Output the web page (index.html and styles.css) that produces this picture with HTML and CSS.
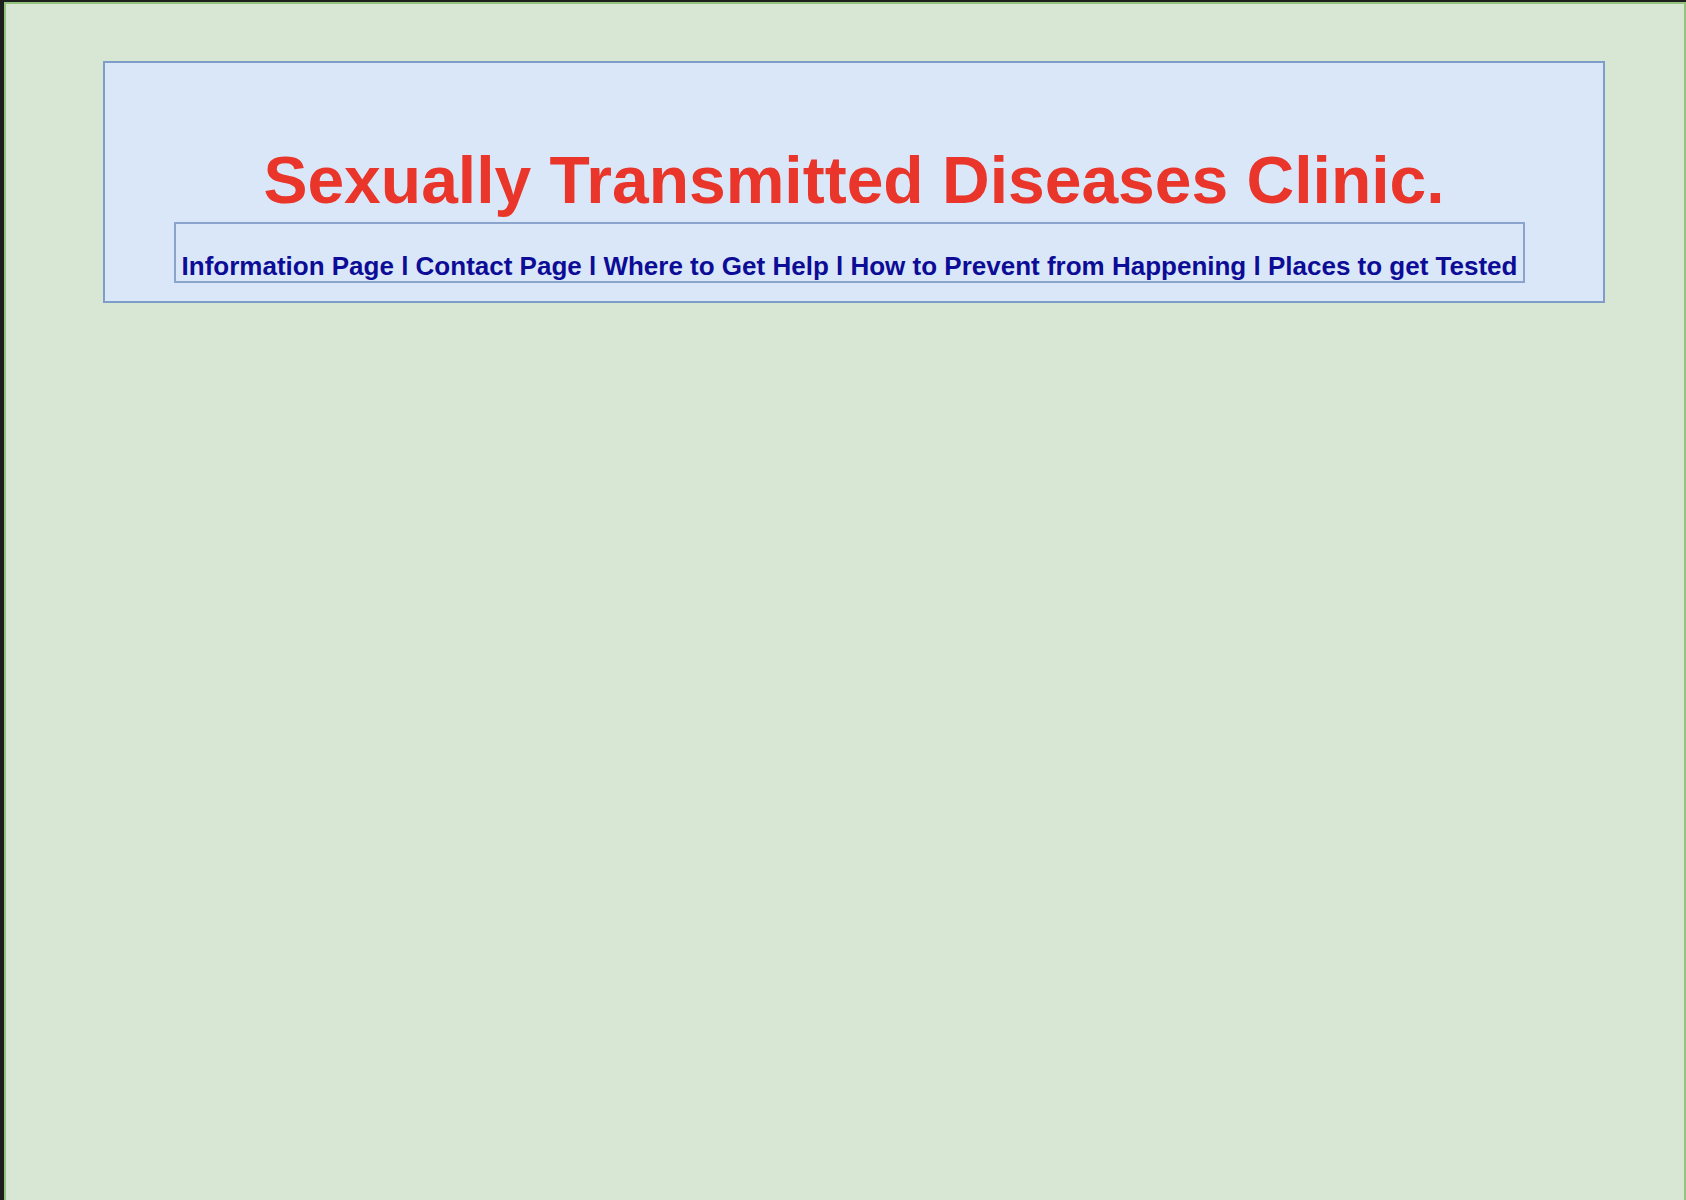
FILE: index.html
```html
<!DOCTYPE html>
<html lang="en">
<head>
<meta charset="utf-8">
<title>Sexually Transmitted Diseases Clinic.</title>
<link rel="stylesheet" href="styles.css">
</head>
<body>
<div class="frame">
  <header class="banner">
    <h1 class="title">Sexually Transmitted Diseases Clinic.</h1>
    <nav class="nav">
      <a href="#">Information Page</a> l <a href="#">Contact Page</a> l <a href="#">Where to Get Help</a> l <a href="#">How to Prevent from Happening</a> l <a href="#">Places to get Tested</a>
    </nav>
  </header>
</div>
</body>
</html>
```
FILE: styles.css
```css
html, body {
  margin: 0;
  padding: 0;
  height: 100%;
}
body {
  background: #1e1e1e;
  font-family: "Liberation Sans", Arial, Helvetica, sans-serif;
}
.frame {
  box-sizing: border-box;
  margin: 2px 0 0 4px;
  height: calc(100% - 2px);
  background: #d8e6d4;
  border: 2px solid #93c47d;
  border-bottom: 0;
  padding: 57px 0 0 97px;
}
.banner {
  box-sizing: border-box;
  width: 1502px;
  background: #dae7f9;
  border: 2px solid #7f9dc9;
  padding: 84px 0 18px 0;
  display: flex;
  flex-direction: column;
}
.title {
  margin: 0;
  font-size: 66px;
  line-height: 66px;
  font-weight: bold;
  color: #e9352a;
  text-align: center;
}
.nav {
  box-sizing: border-box;
  width: 1351px;
  margin: 9px 0 0 69px;
  border: 2px solid #8aa4cc;
  padding: 29px 0 2px 0;
  font-size: 26px;
  line-height: 26px;
  font-weight: bold;
  color: #0c0c96;
  text-align: center;
  white-space: nowrap;
}
.nav a {
  color: #0c0c96;
  text-decoration: none;
}
```
